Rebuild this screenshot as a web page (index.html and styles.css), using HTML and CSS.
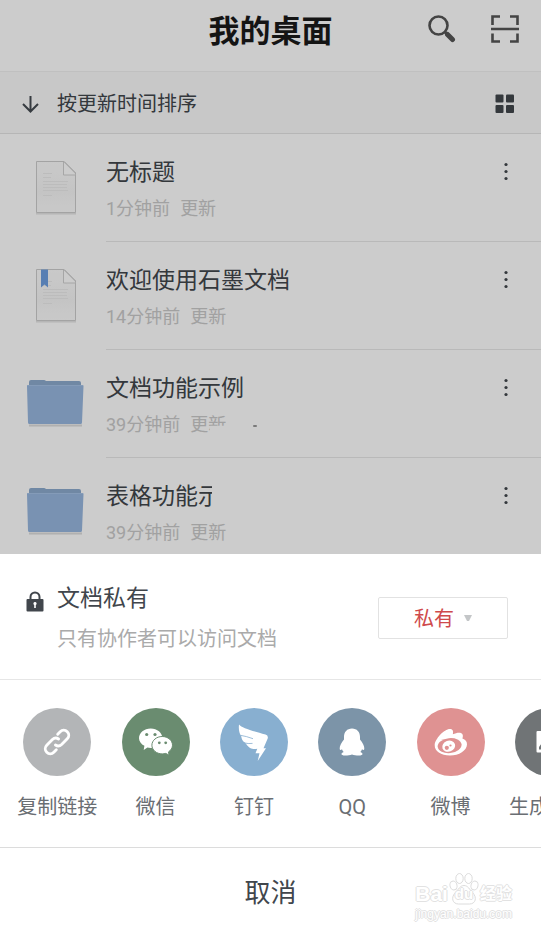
FILE: index.html
```html
<!DOCTYPE html>
<html lang="zh-CN">
<head>
<meta charset="utf-8">
<meta name="viewport" content="width=device-width, initial-scale=1">
<title>我的桌面</title>
<link rel="stylesheet" href="styles.css">
</head>
<body>
<svg class="defs" aria-hidden="true">
  <defs>
    <linearGradient id="paper" x1="0" y1="0" x2="0" y2="1">
      <stop offset="0" stop-color="#fcfcfc"/>
      <stop offset="0.6" stop-color="#f6f6f6"/>
      <stop offset="1" stop-color="#fcfcfc"/>
    </linearGradient>
    <symbol id="doc" viewBox="0 0 64 60">
      <path d="M13 55.500h40" stroke="#e4e4e4" stroke-width="2"/>
      <path d="M13.500 3.500h27.500l11.500 11.500v39.500h-39z" fill="url(#paper)" stroke="#cccccc"/>
      <path d="M40.500 4.500v12.500h12l-11.500-12z" fill="#fff"/>
      <path d="M40.500 4v13h12" fill="none" stroke="#d0d0d0"/>
      <path d="M41 3.500l11.500 11.500" stroke="#cccccc"/>
      <path d="M20 15.500h9M20 19.500h8M20 23.500h25M20 26.500h24M20 29.500h24M20 32.500h25M20 37.500h9" stroke="#ececec"/>
    </symbol>
    <symbol id="folder" viewBox="0 0 64 60">
      <path d="M6 51.500h53" stroke="#dcdcdc" stroke-width="2"/>
      <path d="M6 14V8q0-2 2-2h13q1 0 2 1h33q2 0 2 2v5z" fill="#8dabce"/>
      <path d="M4 12q0-1 1-1h54.500q1 0 1 1L59 48.500q0 1.500-1.500 1.500h-51q-1.500 0-1.500-1.500z" fill="#98b7df"/>
      <path d="M4.500 11.500h55.500" stroke="#a5c2e6"/>
    </symbol>
    <symbol id="more" viewBox="0 0 24 24">
      <circle cx="12" cy="4.500" r="1.600"/><circle cx="12" cy="11.500" r="1.600"/><circle cx="12" cy="18.500" r="1.600"/>
    </symbol>
  </defs>
</svg>

<main class="desktop">
  <header class="topbar">
    <h1>我的桌面</h1>
    <div class="actions">
      <button type="button" aria-label="搜索">
        <svg width="28" height="28" viewBox="0 0 28 28" fill="none" stroke="#555">
          <circle cx="10.500" cy="10.500" r="9" stroke-width="2.600"/>
          <path d="M16.500 16.500l4 4" stroke-width="3"/>
          <path d="M19.500 19.500l5 5" stroke-width="5" stroke-linecap="round"/>
        </svg>
      </button>
      <button type="button" aria-label="扫一扫">
        <svg width="28" height="28" viewBox="0 0 28 28" fill="none" stroke="#555" stroke-width="2.600">
          <path d="M1.500 10V1.500H9M19 1.500h7.500V10M1.500 18.500V26.500H9M19 26.500h7.500V18.500M0 14h28"/>
        </svg>
      </button>
    </div>
  </header>

  <div class="toolbar">
    <button type="button" class="sort">
      <svg width="17" height="17" viewBox="0 0 17 17" fill="none" stroke="#444a50" stroke-width="2"><path d="M8.500 0v15.500M1 8l7.500 7.500L16 8"/></svg>
      <span>按更新时间排序</span>
    </button>
    <button type="button" aria-label="网格视图">
      <svg width="20" height="20" viewBox="0 0 20 20" fill="#41464c"><rect x="0.500" y="0.500" width="8" height="8" rx="1"/><rect x="11" y="0.500" width="8" height="8" rx="1"/><rect x="0.500" y="11" width="8" height="8" rx="1"/><rect x="11" y="11" width="8" height="8" rx="1"/></svg>
    </button>
  </div>

  <ul class="files">
    <li>
      <svg class="thumb"><use href="#doc"/></svg>
      <div class="info">
        <div class="text"><h2>无标题</h2><p><span>1分钟前</span><span>更新</span></p></div>
        <button type="button" class="more" aria-label="更多"><svg><use href="#more"/></svg></button>
      </div>
    </li>
    <li>
      <svg class="thumb"><use href="#doc"/><path d="M18 3.500h7v18l-3.500-3-3.500 3z" fill="#6f9fe0"/></svg>
      <div class="info">
        <div class="text"><h2>欢迎使用石墨文档</h2><p><span>14分钟前</span><span>更新</span></p></div>
        <button type="button" class="more" aria-label="更多"><svg><use href="#more"/></svg></button>
      </div>
    </li>
    <li>
      <svg class="thumb"><use href="#folder"/></svg>
      <div class="info">
        <div class="text"><h2>文档功能示例</h2><p><span>39分钟前</span><span>更<span class="faded">新</span><i class="speck"></i></span></p></div>
        <button type="button" class="more" aria-label="更多"><svg><use href="#more"/></svg></button>
      </div>
    </li>
    <li>
      <svg class="thumb"><use href="#folder"/></svg>
      <div class="info">
        <div class="text"><h2 class="cut">表格功能示</h2><p><span>39分钟前</span><span>更新</span></p></div>
        <button type="button" class="more" aria-label="更多"><svg><use href="#more"/></svg></button>
      </div>
    </li>
  </ul>
</main>

<div class="scrim"></div>

<section class="sheet" role="dialog" aria-label="分享">
  <div class="privacy">
    <svg class="lock" width="18" height="21" viewBox="0 0 18 21">
      <path d="M4.500 9V6a4.500 4.500 0 0 1 9 0v3" fill="none" stroke="#41464c" stroke-width="2"/>
      <rect x="0.500" y="8" width="17" height="12.500" rx="1" fill="#41464c"/>
      <path d="M9 11a1.600 1.600 0 0 1 .8 3v3h-1.600v-3A1.600 1.600 0 0 1 9 11z" fill="#fff"/>
    </svg>
    <div class="privacy-text">
      <h2><label for="access">文档私有</label></h2>
      <p>只有协作者可以访问文档</p>
    </div>
    <div class="access">
      <select id="access"><option>私有</option></select>
      <svg width="10" height="8" viewBox="0 0 10 8" fill="#c4c6c8"><path d="M1 1h8L6 7H4z"/></svg>
    </div>
  </div>

  <div class="share">
    <button type="button">
      <svg viewBox="0 0 68 68"><circle cx="34" cy="34" r="34" fill="#b3b5b7"/>
        <g transform="translate(34 34) rotate(-45)" fill="none" stroke="#fff" stroke-width="2.900" stroke-linecap="round">
          <path d="M6-5H9.500a5 5 0 0 1 0 10H1.500a5 5 0 0 1-4.700-4"/>
          <path d="M-6 5H-9.500a5 5 0 0 1 0-10H-1.500a5 5 0 0 1 4.700 4"/>
        </g></svg>
      <span>复制链接</span>
    </button>
    <button type="button">
      <svg viewBox="0 0 68 68"><circle cx="34" cy="34" r="34" fill="#6a8c70"/>
        <path d="M28.700 20.400c6.500 0 11.700 4.300 11.700 9.800s-5.200 9.800-11.700 9.800c-1.200 0-2.300-.1-3.300-.4L21.700 42l.7-4.200c-3.200-1.700-5.400-4.500-5.400-7.600 0-5.500 5.200-9.800 11.700-9.800z" fill="#fff"/>
        <path d="M40.200 28.500c5.700 0 10.300 3.900 10.300 8.700 0 2.700-1.600 5.100-4 6.700l.6 3.300-3.300-1.800c-1.200.3-2.400.5-3.600.5-5.700 0-10.300-3.900-10.300-8.700s4.600-8.700 10.300-8.700z" fill="#fff" stroke="#6a8c70"/>
        <g fill="#6a8c70"><circle cx="24.700" cy="26.500" r="1.600"/><circle cx="33" cy="26.500" r="1.600"/><circle cx="37.300" cy="34.800" r="1.400"/><circle cx="43.700" cy="34.800" r="1.400"/></g></svg>
      <span>微信</span>
    </button>
    <button type="button">
      <svg viewBox="0 0 68 68"><circle cx="34" cy="34" r="34" fill="#88afd0"/>
        <path d="M19 16.500C22 20 31 22.500 45.500 26.500q3 1 2.200 4L43.500 40.200H46L37.700 53l1.800-7.800H35.500l1.800-4.400C33 41.500 29.500 41 26 35.800l-1.500-1.600C22.500 33 21.500 31 21.200 28 19 25 18.500 21 19 16.500z" fill="#fff"/>
        <path d="M20.500 27.300q6 1 12.500 3.400M24 34.800q4 1.200 8.500 .6" fill="none" stroke="#88afd0" stroke-width=".8"/></svg>
      <span>钉钉</span>
    </button>
    <button type="button">
      <svg viewBox="0 0 68 68"><circle cx="34" cy="34" r="34" fill="#7c94a8"/>
        <path d="M34 20.500c5 0 8 3.500 8 8.500v2.500c2.800 3.500 4.500 6.500 4.300 9.500-.2 1.500-1.300 1.300-2.300.3-.3 1-.9 1.900-1.700 2.700 3 1 3.200 3.500-1.300 3.500-3 0-5-.3-7-1-2 .7-4 1-7 1-4.500 0-4.300-2.500-1.300-3.500-.8-.8-1.400-1.700-1.700-2.700-1 1-2.100 1.200-2.300-.3-.2-3 1.500-6 4.300-9.500V29c0-5 3-8.500 8-8.500z" fill="#fff"/></svg>
      <span>QQ</span>
    </button>
    <button type="button">
      <svg viewBox="0 0 68 68"><circle cx="34" cy="34" r="34" fill="#df9292"/>
        <path d="M17.700 37C18 31 27 21 33 21c3 0 3.500 2.500 2.800 5.300 4-1.800 8-2.300 9.500-.3.800 1.200.7 2.700.1 4.500 3 1 4.600 3 4.600 5.700C50 42.500 42 47.500 33 47.500S17.400 43 17.700 37z" fill="#fff"/>
        <ellipse cx="32.600" cy="37.600" rx="12" ry="7.500" transform="rotate(-6 32.600 37.600)" fill="#df9292"/>
        <ellipse cx="31.700" cy="38.200" rx="6.600" ry="5.500" transform="rotate(-20 31.700 38.200)" fill="#fff"/>
        <g fill="#df9292"><circle cx="29.800" cy="39.800" r="2.100"/><circle cx="33.500" cy="37.500" r="1.100"/></g></svg>
      <span>微博</span>
    </button>
    <button type="button">
      <svg viewBox="0 0 68 68"><circle cx="34" cy="34" r="34" fill="#707476"/>
        <rect x="21.500" y="23" width="25" height="21.500" rx="1" fill="#fff"/>
        <path d="M24 41.500v-2.500l6-8 5 5 4-3 5 6v2.500z" fill="#707476"/><circle cx="39" cy="28.500" r="2" fill="#707476"/></svg>
      <span>生成长图</span>
    </button>
  </div>

  <button type="button" class="cancel">取消</button>

  <div class="mark">
    <div class="mark-name">
      <span>Bai</span>
      <span class="paw">
        <svg width="30" height="34" viewBox="0 0 30 34" fill="#fff" stroke="#dcdcdc">
          <ellipse cx="4.500" cy="12.500" rx="3.500" ry="4.500" transform="rotate(-15 4.500 12.500)"/>
          <ellipse cx="10.500" cy="5.500" rx="3.700" ry="5"/>
          <ellipse cx="19.500" cy="5.500" rx="3.700" ry="5"/>
          <ellipse cx="25.500" cy="12.500" rx="3.500" ry="4.500" transform="rotate(15 25.500 12.500)"/>
          <path d="M15 12.500c4 0 5.500 4 8.500 7 5 5 3 11.500-3 11.500H9.500c-6 0-8-6.500-3-11.500 3-3 4.500-7 8.500-7z"/>
        </svg>
        <span>du</span>
      </span>
      <span>经验</span>
    </div>
    <div class="mark-site">jingyan.baidu.com</div>
  </div>
</section>
</body>
</html>
```
FILE: styles.css
```css
* {
  box-sizing: border-box;
}

body {
  margin: 0;
  min-height: 100vh;
  background: #fff;
  color: #41464c;
  font-family: Roboto, "Noto Sans CJK SC", sans-serif;
  overflow: hidden;
}

h1,
h2,
p,
ul {
  margin: 0;
  padding: 0;
  font-weight: 400;
}

button {
  padding: 0;
  border: 0;
  background: none;
  color: inherit;
  font: inherit;
}

svg {
  display: block;
  flex: none;
}

.defs {
  position: absolute;
  width: 0;
  height: 0;
}

.topbar {
  display: grid;
  grid-template-columns: 1fr auto 1fr;
  align-items: start;
  padding: 10px 22px 18px;
  border-bottom: 1px solid #f0f0f0;
}

.topbar h1 {
  grid-column: 2;
  color: #1a1a1a;
  font-size: 31px;
  font-weight: 700;
  line-height: 43px;
}

.actions {
  display: flex;
  justify-content: flex-end;
  gap: 35px;
  padding-top: 5px;
}

.toolbar {
  display: flex;
  align-items: center;
  justify-content: space-between;
  padding: 17px 26px 14px 22px;
  border-bottom: 1px solid #e4e4e4;
  background: #fafafa;
}

.sort {
  display: flex;
  align-items: center;
  gap: 18px;
  font-size: 20px;
  line-height: 30px;
}

.files {
  list-style: none;
}

.files li {
  display: flex;
  align-items: center;
}

.thumb {
  width: 64px;
  height: 60px;
  margin: 0 19px 0 23px;
}

.info {
  flex: 1;
  display: flex;
  align-items: flex-start;
  justify-content: space-between;
  padding: 23px 23px 18px 0;
  border-bottom: 1px solid #e8e8e8;
}

.text h2 {
  font-size: 23px;
  line-height: 32px;
}

.text p {
  display: flex;
  gap: 10px;
  margin-top: 6px;
  color: #cacaca;
  font-size: 18px;
  line-height: 28px;
}

.text .cut {
  width: 106px;
  overflow: hidden;
  white-space: nowrap;
}

.faded {
  display: inline-block;
  clip-path: polygon(0 0, 100% 0, 100% 53%, 10% 53%, 10% 100%, 0 100%);
}

.speck {
  display: inline-block;
  width: 4px;
  height: 2px;
  margin-left: 27px;
  border-radius: 2px;
  background: #999;
  vertical-align: middle;
}

.more {
  padding-top: 3px;
}

.more svg {
  width: 24px;
  height: 24px;
  fill: #41464c;
}

.scrim {
  position: fixed;
  inset: 0;
  background: rgba(0, 0, 0, 0.2);
}

.sheet {
  position: fixed;
  right: 0;
  bottom: 0;
  left: 0;
  background: #fff;
}

.privacy {
  display: flex;
  align-items: center;
  padding: 28px 33px 25px 26px;
  border-bottom: 1px solid #e6e6e6;
}

.lock {
  align-self: flex-start;
  margin: 9px 13px 0 0;
}

.privacy-text {
  flex: 1;
}

.privacy-text h2 {
  font-size: 23px;
  line-height: 34px;
}

.privacy-text p {
  margin-top: 8px;
  color: #aaa;
  font-size: 20px;
  line-height: 30px;
}

.access {
  position: relative;
}

.access select {
  width: 130px;
  height: 42px;
  padding: 2px 35px 0;
  border: 1px solid #e2e2e2;
  border-radius: 2px;
  background: #fff;
  color: #cf4a4c;
  font: inherit;
  font-size: 20px;
  appearance: none;
}

.access svg {
  position: absolute;
  top: 17px;
  right: 35px;
  pointer-events: none;
}

.share {
  display: grid;
  grid-auto-flow: column;
  grid-auto-columns: calc(100vw / 5.5);
  padding: 28px 0 25px 8px;
  border-bottom: 1px solid #dcdcdc;
  overflow: hidden;
}

.share button {
  display: flex;
  flex-direction: column;
  align-items: center;
  gap: 16px;
  color: #6a6e73;
  font-size: 20px;
  line-height: 30px;
  white-space: nowrap;
}

.share svg {
  width: 68px;
  height: 68px;
}

.cancel {
  display: block;
  width: 100%;
  padding: 25px 0 18px;
  font-size: 26px;
  line-height: 40px;
}

.mark {
  position: absolute;
  right: 29px;
  bottom: 10px;
  color: #fff;
  font-family: "Liberation Sans", "Noto Sans CJK SC", sans-serif;
  text-shadow: 1px 0 #e2e2e2, -1px 0 #e2e2e2, 0 1px #e2e2e2, 0 -1px #e2e2e2;
  pointer-events: none;
}

.mark-name {
  display: flex;
  align-items: flex-end;
  justify-content: space-between;
  font-size: 21px;
  font-weight: 700;
  line-height: 26px;
}

.mark-name > :last-child {
  font-size: 16px;
}

.paw {
  position: relative;
}

.paw span {
  position: absolute;
  right: 0;
  bottom: 0;
  left: 0;
  font-size: 15px;
  text-align: center;
}

.mark-site {
  font-size: 12px;
  line-height: 14px;
}
```
